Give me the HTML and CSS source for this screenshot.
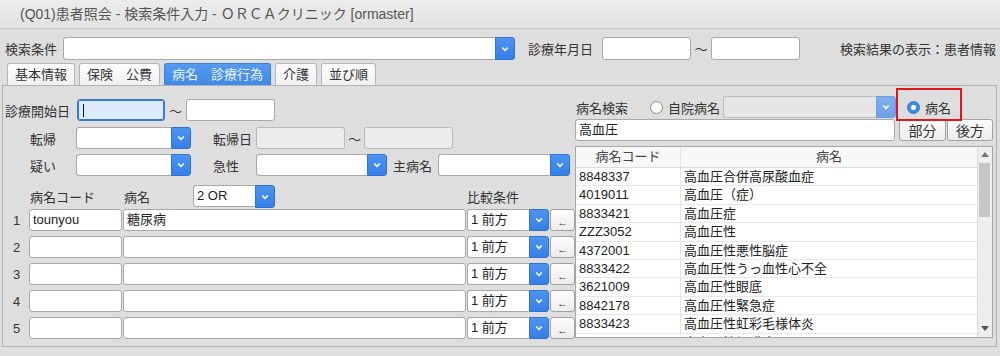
FILE: index.html
```html
<!DOCTYPE html>
<html lang="ja">

<head>
    <meta charset="UTF-8">
    <meta name="viewport" content="width=device-width, initial-scale=1.0">
    <title>(Q01)患者照会</title>
    <link rel="stylesheet" href="styles.css">
</head>

<body>

    <div class="titlebar">(Q01)患者照会 - 検索条件入力 - ＯＲＣＡクリニック [ormaster]</div>

    <!-- 検索条件 -->
    <div class="topbar">
        <span class="lbl lbl-cond">検索条件</span>
        <div class="combo w452">
            <div class="field"></div>
            <div class="drop"><svg width="8" height="6" viewBox="0 0 8 6"><path d="M1.2 1.5 L4 4.3 L6.8 1.5" fill="none" stroke="#fff" stroke-width="1.6"/></svg></div>
        </div>
        <span class="lbl lbl-date">診療年月日</span>
        <div class="field w89"></div>
        <span class="tilde w20">〜</span>
        <div class="field w89"></div>
        <span class="result">検索結果の表示：患者情報</span>
    </div>

    <div class="tabs">
        <div class="tab">基本情報</div>
        <div class="tab">保険　公費</div>
        <div class="tab active">病名　診療行為</div>
        <div class="tab">介護</div>
        <div class="tab">並び順</div>
    </div>

    <div class="panel">

        <!-- left side -->
        <div class="left">
            <div class="frow row-a">
                <span class="lbl w72">診療開始日</span>
                <div class="field focus w88"><span class="caret"></span></div>
                <span class="tilde w21">〜</span>
                <div class="field w89"></div>
            </div>

            <div class="frow row-b">
                <span class="lbl lbl-sub w71">転帰</span>
                <div class="combo w115">
                    <div class="field"></div>
                    <div class="drop"><svg width="8" height="6" viewBox="0 0 8 6"><path d="M1.2 1.5 L4 4.3 L6.8 1.5" fill="none" stroke="#fff" stroke-width="1.6"/></svg></div>
                </div>
                <span class="lbl lbl-mid w65">転帰日</span>
                <div class="field off w89"></div>
                <span class="tilde w19">〜</span>
                <div class="field off w89"></div>
            </div>

            <div class="frow row-c">
                <span class="lbl lbl-sub w71">疑い</span>
                <div class="combo w115">
                    <div class="field"></div>
                    <div class="drop"><svg width="8" height="6" viewBox="0 0 8 6"><path d="M1.2 1.5 L4 4.3 L6.8 1.5" fill="none" stroke="#fff" stroke-width="1.6"/></svg></div>
                </div>
                <span class="lbl lbl-mid w65">急性</span>
                <div class="combo w131">
                    <div class="field"></div>
                    <div class="drop"><svg width="8" height="6" viewBox="0 0 8 6"><path d="M1.2 1.5 L4 4.3 L6.8 1.5" fill="none" stroke="#fff" stroke-width="1.6"/></svg></div>
                </div>
                <span class="lbl lbl-main w51">主病名</span>
                <div class="combo w132">
                    <div class="field"></div>
                    <div class="drop"><svg width="8" height="6" viewBox="0 0 8 6"><path d="M1.2 1.5 L4 4.3 L6.8 1.5" fill="none" stroke="#fff" stroke-width="1.6"/></svg></div>
                </div>
            </div>

            <div class="cond-head">
                <span></span>
                <span class="lbl lbl-code">病名コード</span>
                <div class="name-head">
                    <span class="lbl lbl-name">病名</span>
                    <div class="combo combo-tall w82">
                        <div class="field">2 OR</div>
                        <div class="drop"><svg width="8" height="6" viewBox="0 0 8 6"><path d="M1.2 1.5 L4 4.3 L6.8 1.5" fill="none" stroke="#fff" stroke-width="1.6"/></svg></div>
                    </div>
                </div>
                <span class="lbl">比較条件</span>
                <span></span>
            </div>

            <div id="condRows"></div>
        </div>

        <!-- right side -->
        <div class="right">
            <div class="frow radio-row">
                <span class="lbl w75">病名検索</span>
                <span class="radio"></span>
                <span class="lbl radio-lbl">自院病名</span>
                <div class="combo combo-off w173">
                    <div class="field"></div>
                    <div class="drop"><svg width="8" height="6" viewBox="0 0 8 6"><path d="M1.2 1.5 L4 4.3 L6.8 1.5" fill="none" stroke="#fff" stroke-width="1.6"/></svg></div>
                </div>
                <span class="radio on"></span>
                <span class="lbl radio-lbl">病名</span>
            </div>
            <div class="mark"></div>

            <div class="frow search-row">
                <div class="field w320">高血圧</div>
                <button class="btn">部分</button>
                <button class="btn">後方</button>
            </div>

            <div class="list">
                <div class="list-body">
                    <div class="lrow lhead">
                        <span>病名コード</span>
                        <span>病名</span>
                    </div>
                    <div id="listRows"></div>
                </div>
                <div class="scroll">
                    <span class="arrow up"></span>
                    <span class="thumb"></span>
                    <span class="arrow down"></span>
                </div>
            </div>
        </div>

    </div>

    <script>
        // 病名入力の行
        var condHtml = "";
        for (var i = 1; i <= 5; i++) {
            condHtml += '<div class="cond-row">' +
                '<span class="num">' + i + '</span>' +
                '<div class="field">' + (i === 1 ? 'tounyou' : '') + '</div>' +
                '<div class="field">' + (i === 1 ? '糖尿病' : '') + '</div>' +
                '<div class="combo"><div class="field">1 前方</div><div class="drop"><svg width="8" height="6" viewBox="0 0 8 6"><path d="M1.2 1.5 L4 4.3 L6.8 1.5" fill="none" stroke="#fff" stroke-width="1.6"/></svg></div></div>' +
                '<button class="btn btn-arrow">←</button>' +
                '</div>';
        }
        document.getElementById("condRows").innerHTML = condHtml;

        // 検索結果
        var results = [
            ["8848337", "高血圧合併高尿酸血症"],
            ["4019011", "高血圧（症）"],
            ["8833421", "高血圧症"],
            ["ZZZ3052", "高血圧性"],
            ["4372001", "高血圧性悪性脳症"],
            ["8833422", "高血圧性うっ血性心不全"],
            ["3621009", "高血圧性眼底"],
            ["8842178", "高血圧性緊急症"],
            ["8833423", "高血圧性虹彩毛様体炎"],
            ["8833424", "高血圧性網膜症"]
        ];
        var listHtml = "";
        results.forEach(function (r) {
            listHtml += '<div class="lrow"><span>' + r[0] + '</span><span>' + r[1] + '</span></div>';
        });
        document.getElementById("listRows").innerHTML = listHtml;
    </script>

</body>

</html>
```

FILE: styles.css
```css
body {
    margin: 0;
    background: #dedede;
    color: #333;
    font-family: "Liberation Sans", "Noto Sans CJK JP", sans-serif;
    font-size: 13px;
}

.titlebar {
    height: 28px;
    line-height: 28px;
    padding-left: 20px;
    font-size: 14px;
    color: #555;
    background: linear-gradient(#ececec, #e2e2e2);
    border-bottom: 1px solid #c6c6c6;
}

.lbl {
    display: inline-block;
    white-space: nowrap;
    flex: none;
}

.w19 { width: 19px; }
.w20 { width: 20px; }
.w21 { width: 21px; }
.w51 { width: 51px; }
.w65 { width: 65px; }
.w71 { width: 71px; }
.w72 { width: 72px; }
.w75 { width: 75px; }
.w82 { width: 82px; }
.w88 { width: 88px; }
.w89 { width: 89px; }
.w115 { width: 115px; }
.w131 { width: 131px; }
.w132 { width: 132px; }
.w173 { width: 173px; }
.w320 { width: 320px; }
.w452 { width: 452px; }

/* inputs */
.field {
    box-sizing: border-box;
    height: 22px;
    line-height: 20px;
    padding: 0 3px;
    background: #fff;
    border: 1px solid #a9a9a9;
    border-radius: 3px;
    color: #222;
    white-space: nowrap;
    overflow: hidden;
    flex: none;
}

.field.off {
    background: #ececec;
    border-color: #b8b8b8;
}

.field.focus {
    background: #dcebfb;
    border: 1px solid #3a78d4;
    box-shadow: inset 0 0 0 1px #3a78d4;
    position: relative;
}

.caret {
    display: block;
    width: 1px;
    height: 13px;
    margin: 4px 0 0 2px;
    background: #111;
}

.combo {
    display: flex;
    height: 22px;
    flex: none;
}

.combo .field {
    flex: 1;
    border-radius: 3px 0 0 3px;
    border-right: none;
}

.drop {
    width: 20px;
    flex: none;
    display: flex;
    align-items: center;
    justify-content: center;
    background: linear-gradient(#4d94f0, #3580e6);
    border: 1px solid #2f72d2;
    box-sizing: border-box;
    border-radius: 0 3px 3px 0;
}

.combo-tall {
    height: 23px;
}

.combo-off .field {
    background: #e6e6e6;
    border-color: #bcbcbc;
}

.combo-off .drop {
    background: linear-gradient(#82b0f0, #6f9fe6);
    border-color: #6d9be0;
}

.tilde {
    display: inline-block;
    text-align: center;
    flex: none;
    color: #333;
}

/* top row */
.topbar {
    display: flex;
    align-items: center;
    height: 23px;
    margin-top: 8px;
    padding: 0 4px 0 5px;
}

.topbar .field {
    height: 23px;
}

.topbar .combo {
    height: 23px;
}

.lbl-cond {
    width: 58px;
}

.lbl-date {
    width: 74px;
    margin-left: 13px;
}

.result {
    margin-left: auto;
    white-space: nowrap;
}

/* tabs */
.tabs {
    display: flex;
    gap: 4px;
    height: 22px;
    margin-top: 3px;
    padding-left: 7px;
}

.tab {
    box-sizing: border-box;
    height: 22px;
    line-height: 21px;
    padding: 0 7px;
    border: 1px solid #b6b6b6;
    border-bottom: none;
    border-radius: 3px 3px 0 0;
    background: linear-gradient(#ffffff, #f0f0f0);
    white-space: nowrap;
}

.tab.active {
    background: linear-gradient(#559bf0, #3f88e6);
    border-color: #3a7fd8;
    color: #eef4ff;
}

/* main panel */
.panel {
    display: flex;
    box-sizing: border-box;
    height: 262px;
    margin: 0 3px 0 2px;
    border: 1px solid #b2b2b2;
    background: #dedede;
}

.left {
    width: 572px;
    padding-top: 13px;
}

.frow {
    display: flex;
    align-items: center;
    height: 22px;
}

.left .frow {
    padding-left: 2px;
}

.row-a {
    margin-bottom: 6px;
}

.row-b {
    margin-bottom: 5px;
}

.lbl-sub {
    padding-left: 25px;
    box-sizing: border-box;
}

.lbl-mid {
    padding-left: 22px;
    box-sizing: border-box;
}

.lbl-main {
    padding-left: 6px;
    box-sizing: border-box;
}

.cond-head,
.cond-row {
    display: grid;
    grid-template-columns: 25px 93px 343px 82px 25px;
    column-gap: 1px;
    align-items: center;
}

.cond-head {
    height: 23px;
    margin-top: 9px;
}

.lbl-code {
    padding-left: 1px;
}

.name-head {
    display: flex;
    align-items: center;
}

.lbl-name {
    width: 70px;
    padding-left: 1px;
    box-sizing: border-box;
}

.cond-row {
    height: 22px;
    margin-top: 5px;
}

.cond-row:first-child {
    margin-top: 1px;
}

.cond-row .combo .field {
    padding-left: 3px;
}

.num {
    text-align: center;
    padding-left: 2px;
}

.btn {
    box-sizing: border-box;
    height: 22px;
    padding: 0;
    border: 1px solid #a2a2a2;
    border-radius: 3px;
    background: linear-gradient(#fdfdfd, #ececec);
    font-family: "Liberation Sans", "Noto Sans CJK JP", sans-serif;
    font-size: 14px;
    color: #333;
}

.btn-arrow {
    font-size: 11px;
    padding-top: 3px;
    color: #444;
}

/* right side */
.right {
    position: relative;
    width: 418px;
    padding-top: 10px;
}

.radio-row .lbl {
    padding-left: 1px;
    box-sizing: border-box;
}

.radio {
    width: 13px;
    height: 13px;
    box-sizing: border-box;
    border: 1px solid #8c8c8c;
    border-radius: 50%;
    background: #fff;
    flex: none;
}

.radio.on {
    margin-left: 11px;
    border-color: #2f74d6;
    background: radial-gradient(circle, #fff 0 2.4px, #3d8bea 2.9px);
}

.radio-lbl {
    margin-left: 4px;
    margin-right: 3px;
}

/* annotation */
.mark {
    position: absolute;
    left: 321px;
    top: 2px;
    width: 66px;
    height: 33px;
    box-sizing: border-box;
    border: 2px solid #e3161e;
}

.search-row {
    margin-top: 1px;
}

.search-row .btn {
    width: 46px;
    margin-left: 1px;
}

.search-row .btn:first-of-type {
    width: 47px;
    margin-left: 4px;
}

.list {
    display: flex;
    box-sizing: border-box;
    width: 418px;
    height: 192px;
    margin-top: 5px;
    border: 1px solid #a8a8a8;
    background: #fff;
    overflow: hidden;
}

.list-body {
    flex: 1;
}

.lrow {
    display: grid;
    grid-template-columns: 105px 1fr;
    height: 18.4px;
    line-height: 18px;
    border-bottom: 1px solid #e8e8e8;
    box-sizing: border-box;
    color: #222;
    white-space: nowrap;
}

.lrow span {
    padding-left: 3px;
}

.lrow span:first-child {
    border-right: 1px solid #e4e4e4;
}

.lhead {
    height: 21px;
    line-height: 20px;
    background: #f8f8f8;
    border-bottom: 1px solid #dcdcdc;
    color: #444;
}

.lhead span {
    text-align: center;
    padding-left: 0;
}

.scroll {
    position: relative;
    width: 14px;
    flex: none;
    background: #eeeeee;
    border-left: 1px solid #dddddd;
}

.arrow {
    position: absolute;
    left: 3px;
    width: 0;
    height: 0;
    border-left: 4px solid transparent;
    border-right: 4px solid transparent;
}

.arrow.up {
    top: 5px;
    border-bottom: 5px solid #777;
}

.arrow.down {
    bottom: 6px;
    border-top: 5px solid #555;
}

.thumb {
    position: absolute;
    left: 1px;
    top: 16px;
    width: 11px;
    height: 54px;
    background: #c6c6c6;
}
```
